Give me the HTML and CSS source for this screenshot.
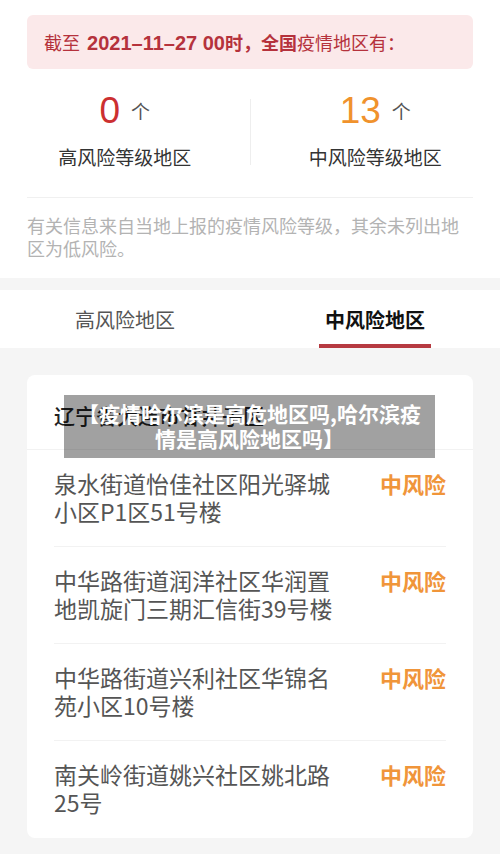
FILE: index.html
```html
<!DOCTYPE html>
<html lang="zh-CN">
<head>
    <meta charset="UTF-8">
    <title>全国疫情风险地区</title>
    <link rel="stylesheet" href="styles.css">
</head>
<body>

<div class="summary">
    <div class="banner">截至 <b class="date">2021–11–27 00</b><b>时，全国</b>疫情地区有：</div>
    <div class="stats">
        <div class="stat">
            <div class="count"><span class="num high">0</span><span class="unit">个</span></div>
            <div class="label">高风险等级地区</div>
        </div>
        <div class="sep"></div>
        <div class="stat">
            <div class="count"><span class="num mid">13</span><span class="unit">个</span></div>
            <div class="label">中风险等级地区</div>
        </div>
    </div>
    <p class="note">有关信息来自当地上报的疫情风险等级，其余未列出地区为低风险。</p>
</div>

<div class="tabs">
    <div class="tab"><span>高风险地区</span></div>
    <div class="tab active"><span>中风险地区</span></div>
</div>

<div class="card">
    <div class="card-title">辽宁省大连市甘井子区</div>
    <div class="row">
        <div class="place">泉水街道怡佳社区阳光驿城小区P1区51号楼</div>
        <div class="level">中风险</div>
    </div>
    <div class="row">
        <div class="place">中华路街道润洋社区华润置地凯旋门三期汇信街39号楼</div>
        <div class="level">中风险</div>
    </div>
    <div class="row">
        <div class="place">中华路街道兴利社区华锦名苑小区10号楼</div>
        <div class="level">中风险</div>
    </div>
    <div class="row">
        <div class="place">南关岭街道姚兴社区姚北路25号</div>
        <div class="level">中风险</div>
    </div>
</div>

<div class="caption">【疫情哈尔滨是高危地区吗,哈尔滨疫情是高风险地区吗】</div>

</body>
</html>
```

FILE: styles.css
```css
body { margin: 0; background: #f5f5f5; font-family: "Noto Sans CJK SC", "Noto Sans", sans-serif; color: #333; height: 854px; overflow: hidden; position: relative; }

.summary { background: white; padding: 15px 27px 0; }
.banner { height: 54px; line-height: 54px; background: #fbe9ea; border-radius: 6px; padding-left: 17px; font-size: 18px; color: #b5323c; }
.banner b { font-weight: 700; }
.banner .date { font-family: "Liberation Sans", "Noto Sans CJK SC", sans-serif; font-size: 20px; margin-left: 3px; }

.stats { display: flex; align-items: center; margin: 0 -27px; padding: 24px 0 27px; }
.stat { flex: 1; text-align: center; }
.sep { width: 1px; height: 66px; background: #eeeeee; }
.count { height: 36px; line-height: 36px; }
.num { font-size: 37px; font-weight: 500; font-family: "Liberation Sans", "Noto Sans", sans-serif; }
.num.high { color: #cc2f31; }
.num.mid { color: #f0922c; }
.unit { font-size: 19px; color: #555; margin-left: 11px; vertical-align: 4px; }
.label { margin-top: 15px; font-size: 19px; line-height: 26px; color: #333; }

.note { margin: 0; padding: 16px 0 18px; border-top: 1px solid #f0f0f0; font-size: 18px; line-height: 23px; color: #b3b3b3; }

.tabs { display: flex; background: white; margin-top: 12px; height: 58px; }
.tab { flex: 1; text-align: center; padding-top: 16px; box-sizing: border-box; }
.tab span { display: inline-block; font-size: 20px; line-height: 28px; padding: 0 6px 10px; border-bottom: 4px solid transparent; color: #555; }
.tab.active span { color: #111; font-weight: 700; border-bottom-color: #b63a41; }

.card { margin: 27px 27px 0; background: white; border-radius: 8px; }
.card-title { height: 75px; line-height: 80px; padding: 0 27px; font-size: 21px; font-weight: 500; color: #222; border-bottom: 1px solid #f2f2f2; box-sizing: border-box; }
.row { display: flex; justify-content: space-between; margin: 0 27px; padding: 19px 0 22px; border-bottom: 1px solid #f2f2f2; height: 97px; box-sizing: border-box; }
.row:last-child { border-bottom: none; }
.place { width: 290px; font-size: 23px; line-height: 28px; color: #555; }
.level { font-size: 22px; line-height: 28px; font-weight: 700; color: #f0953a; }

.caption { position: absolute; top: 395px; left: 64px; width: 371px; height: 63px; box-sizing: border-box; padding: 6px 10px; background: rgba(0, 0, 0, 0.37); color: white; font-size: 21px; font-weight: 700; line-height: 25px; text-align: center; }
```
